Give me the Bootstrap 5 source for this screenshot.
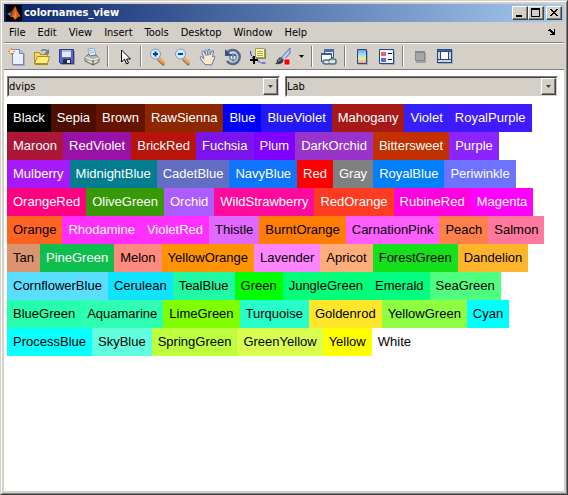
<!DOCTYPE html>
<html lang="en">
<head>
<meta charset="utf-8">
<meta name="viewport" content="width=device-width, initial-scale=1">
<title>colornames_view</title>
<link href="https://cdn.jsdelivr.net/npm/bootstrap@5.3.0/dist/css/bootstrap.min.css" rel="stylesheet">
<style>
  :root { --face: #d4d0c8; --shade: #808080; --dark: #404040; }
  body { background: var(--face); color: #000; font: 11px/16px "DejaVu Sans Condensed", "Noto Sans", sans-serif; }
  button { padding: 0; border: 0; background: none; color: #000; }
  svg { display: block; }
  .win-outer { border: 1px solid; border-color: var(--face) var(--dark) var(--dark) var(--face); }
  .win-inner { border: 1px solid; border-color: #fff var(--shade) var(--shade) #fff; padding: 2px; }
  .titlebar { height: 18px; background: linear-gradient(90deg, #0a246a, #a6caf0); color: #fff; padding: 0 2px; }
  .titlebar h1 { font-size: 11px; line-height: 18px; font-weight: 700; padding-left: 2px; }
  .win-btn { width: 16px; height: 14px; background: var(--face); border: 1px solid; border-color: #fff var(--dark) var(--dark) #fff; box-shadow: inset -1px -1px var(--shade); }
  .win-close { margin-left: 2px; }
  .menubar { height: 21px; padding-left: 5px; border-bottom: 1px solid var(--shade); }
  .menubar a { color: #000; text-decoration: none; margin-right: 12px; line-height: 21px; }
  .toolbar { height: 27px; border-top: 1px solid #fff; border-bottom: 1px solid var(--shade); }
  .tool { width: 25px; height: 24px; }
  .tool-more { width: 13px; }
  .divider { width: 2px; height: 21px; margin: 0 3px; background: linear-gradient(90deg, var(--shade) 50%, #fff 50%); }
  .figure-area { padding: 6px 6px 0 3px; gap: 7px; }
  .combos { gap: 5px; }
  .combo { border: 1px solid; border-color: var(--shade) #fff #fff var(--shade); }
  .combo select { appearance: none; height: 19px; padding: 1px 0 0; border: 1px solid; border-color: var(--dark) var(--face) var(--face) var(--dark); border-radius: 0; background: var(--face); color: #000; }
  .combo-arrow { right: 1px; top: 1px; width: 15px; height: 17px; background: var(--face); border: 1px solid; border-color: #fff var(--dark) var(--dark) #fff; box-shadow: inset -1px -1px var(--shade); pointer-events: none; }
  .swatch { height: 28px; padding: 0 6px; color: #000; font: 13px/28px "Liberation Sans", Arial, sans-serif; white-space: nowrap; }
  .swatch.on-dark { color: #fff; }
</style>
<script src="https://cdn.jsdelivr.net/npm/bootstrap@5.3.0/dist/js/bootstrap.bundle.min.js"></script>
</head>
<body>
<div class="win-outer vh-100 d-flex">
<div class="win-inner flex-fill d-flex flex-column overflow-hidden">
  <header class="titlebar d-flex align-items-center flex-shrink-0">
    <svg width="16" height="16" viewBox="0 0 16 16" aria-hidden="true"><rect width="16" height="16" fill="#000"/><path d="M1 9l4-2 2-2 2 2-4 5-2-2z" fill="#4a90b0"/><path d="M5 7l4-5-1 6-3 4-1-1z" fill="#70371c"/><path d="M9 1c1 1 2 5 4 8l2 3c-2-1-3 0-4 1l-2 2-2-3-2 0z" fill="#e05a1a"/><path d="M9 2l1 5-2 5 1 2 1-6z" fill="#f8a840"/></svg>
    <h1 class="m-0 flex-fill">colornames_view</h1>
    <button type="button" class="win-btn" aria-label="Minimize"><svg width="14" height="12" shape-rendering="crispEdges"><path d="M3 8h6v2H3z"/></svg></button>
    <button type="button" class="win-btn" aria-label="Maximize"><svg width="14" height="12" shape-rendering="crispEdges"><path fill-rule="evenodd" d="M2 1h9v9H2zM3 3v6h7V3z"/></svg></button>
    <button type="button" class="win-btn win-close" aria-label="Close"><svg width="14" height="12" shape-rendering="crispEdges"><path d="M3 2h2v1h1v1h2v-1h1v-1h2v1h-1v1h-1v1h-1v1h1v1h1v1h1v1h-2v-1h-1v-1h-2v1h-1v1h-2v-1h1v-1h1v-1h1v-1h-1v-1h-1v-1h-1z"/></svg></button>
  </header>

  <nav class="menubar d-flex flex-shrink-0">
    <a href="#">File</a><a href="#">Edit</a><a href="#">View</a><a href="#">Insert</a><a href="#">Tools</a><a href="#">Desktop</a><a href="#">Window</a><a href="#">Help</a>
    <button type="button" class="ms-auto me-1 px-1" aria-label="Dock figure"><svg width="8" height="8" shape-rendering="crispEdges"><path d="M0 2h1v-1h2v1h1v1h1v1h1v-3h1v6h-5v-1h2v-1h-1v-1h-1v-1h-2z"/></svg></button>
  </nav>

  <div class="toolbar d-flex align-items-center flex-shrink-0" role="toolbar" aria-label="Figure tools">
    <button type="button" class="tool d-flex align-items-center justify-content-center" aria-label="New figure"><svg width="18" height="18"><path d="M5 2h8l4 4v12H5z" fill="#8e98a8" opacity=".6"/><path d="M4.500 1.500h7l4 4v11h-11z" fill="#e8f2ff" stroke="#6b87bd"/><path d="M11.500 1.500v4h4" fill="#b5cef0" stroke="#6b87bd"/><path d="M1 1l5 5M6 1L1 6M3.500 0v7M0 3.500h7" stroke="#e77a43"/><rect x="2" y="2" width="3" height="3" fill="#ffe5a6"/></svg></button>
    <button type="button" class="tool d-flex align-items-center justify-content-center" aria-label="Open"><svg width="18" height="18"><path d="M2 5h5l2 2h6v10H2z" fill="#ad8419"/><path d="M1.500 4.500h5l1 2h7v9h-13z" fill="#f6d968" stroke="#b28a20"/><path d="M1.500 15.500l3-7h12l-2 7z" fill="#ffeb83" stroke="#b28a20"/><path d="M8 3q4-3 7 1" fill="none" stroke="#60809c" stroke-width="1.500"/><path d="M16 1v5h-5z" fill="#60809c"/></svg></button>
    <button type="button" class="tool d-flex align-items-center justify-content-center" aria-label="Save"><svg width="18" height="18"><path d="M3 3h14v14H3z" fill="#9b9b9b"/><path d="M1.500 1.500h14v14h-13l-1-1z" fill="#5663ce" stroke="#30388b"/><path d="M4 2h9v7H4z" fill="#e5ebff"/><path d="M4 2h9v2H4z" fill="#a9bbeb"/><path d="M5 11h8v5H5z" fill="#222c49"/><path d="M9 12h3v3H9z" fill="#e4e7ef"/></svg></button>
    <button type="button" class="tool d-flex align-items-center justify-content-center" aria-label="Print"><svg width="18" height="18"><path d="M5 1l6-1 2 7-7 2z" fill="#e2f1ff" stroke="#88a8cb"/><path d="M6 3l4-1M7 5l4-1" stroke="#8dacdd"/><path d="M2 9l4-3 1 2 6-1 3 3v4l-6 3-8-4z" fill="#b9b9b2" stroke="#6f6f6d"/><path d="M2 9l8 3 6-2M5 13l5 2 4-2" fill="none" stroke="#f6f6ef"/><path d="M10 12v5" stroke="#4e4e4c"/></svg></button>
    <span class="divider"></span>
    <button type="button" class="tool d-flex align-items-center justify-content-center" aria-label="Edit plot"><svg width="18" height="18"><path d="M5.500 2v12l3-3 2 5 2-1-2-4h4z" fill="#fff" stroke="#000"/></svg></button>
    <span class="divider"></span>
    <button type="button" class="tool d-flex align-items-center justify-content-center" aria-label="Zoom in"><svg width="18" height="18"><path d="M9 11l6 6" stroke="#8c7a65" stroke-width="3"/><path d="M9 9l6 6" stroke="#f0a747" stroke-width="3"/><circle cx="6.500" cy="6" r="5" fill="#cfefff" stroke="#7c99c8"/><path d="M4 6h5M6.500 3.500v5" stroke="#143b9b" stroke-width="2"/></svg></button>
    <button type="button" class="tool d-flex align-items-center justify-content-center" aria-label="Zoom out"><svg width="18" height="18"><path d="M9 11l6 6" stroke="#8c7a65" stroke-width="3"/><path d="M9 9l6 6" stroke="#f0a747" stroke-width="3"/><circle cx="6.500" cy="6" r="5" fill="#cfefff" stroke="#7c99c8"/><path d="M4 6h5" stroke="#143b9b" stroke-width="2"/></svg></button>
    <button type="button" class="tool d-flex align-items-center justify-content-center" aria-label="Pan"><svg width="18" height="18"><path d="M6 16.500l-4-5q-2-3 0-3l3 2-2-6q0-2 2-1l2 4-1-5q1-2 2 0l1 5V2q1-2 2 0v5l2-4q2-1 1.500 1l-1 5 1-1q2 0 1 2l-2 5-1 2z" fill="#ffe9cb" stroke="#5b7cba"/></svg></button>
    <button type="button" class="tool d-flex align-items-center justify-content-center" aria-label="Rotate 3D"><svg width="18" height="18"><path d="M3 5a7 7 0 1 1 0 8" fill="none" stroke="#52688e" stroke-width="2.500"/><path d="M1 1v7h7z" fill="#3a5280"/><path d="M6 7l3-1 3 1v4l-3 2-3-2zM6 7l3 1 3-1M9 8v5" fill="#e6f1ff" stroke="#38588c"/></svg></button>
    <button type="button" class="tool d-flex align-items-center justify-content-center" aria-label="Data cursor"><svg width="18" height="18"><path d="M1.500 3q0 5 4 9 4 0 6 3h5" fill="none" stroke="#1a20ed" stroke-dasharray="5 1"/><path d="M7 1h10v10H7z" fill="#868568"/><path d="M6.500.5h9v9h-9z" fill="#fffbb2" stroke="#a69e45"/><path d="M8 3.500h6M8 5.500h6M8 7.500h6" stroke="#b0a95c"/><path d="M1 12h8M5 8v8" stroke="#000" stroke-width="2"/></svg></button>
    <button type="button" class="tool d-flex align-items-center justify-content-center" aria-label="Brush"><svg width="18" height="18"><path d="M7 10l9-10v5l-6 7z" fill="#c0c7ef" stroke="#616eb4"/><path d="M1 16q2-1 2-4l3-3 4 3q-1 5-9 4z" fill="#36424e"/><path d="M4 13l3-2" stroke="#a8b4bf"/><path d="M10 11h6v6h-6z" fill="#f00" stroke="#fff" stroke-width=".7"/></svg></button>
    <button type="button" class="tool tool-more d-flex align-items-center justify-content-center" aria-label="Brush options"><svg width="5" height="3"><path d="M0 0h5L2.500 3z"/></svg></button>
    <span class="divider"></span>
    <button type="button" class="tool d-flex align-items-center justify-content-center" aria-label="Link plot"><svg width="18" height="18"><path d="M4.500 1.500h9v8h-9z" fill="#edf3ff" stroke="#304f91"/><path d="M4 1h10v3H4z" fill="#4b6fb4"/><path d="M1.500 5.500h10v8h-10z" fill="#fff" stroke="#304f91"/><path d="M1 5h11v2H1z" fill="#3c5d9d"/><g fill="#cfe0e7" stroke="#58707e" stroke-width="1.500"><rect x="3" y="12" width="7" height="4" rx="2"/><rect x="9" y="11" width="7" height="5" rx="2"/></g><path d="M7 14h5" stroke="#fff"/></svg></button>
    <span class="divider"></span>
    <button type="button" class="tool d-flex align-items-center justify-content-center" aria-label="Insert colorbar"><svg width="18" height="18"><defs><linearGradient id="bar" x2="0" y2="1"><stop stop-color="#8a8df0"/><stop offset=".35" stop-color="#8de5ef"/><stop offset=".65" stop-color="#f1e99b"/><stop offset="1" stop-color="#f19e8c"/></linearGradient></defs><path d="M5 3h10v14H5z" fill="#a9a9a9"/><path d="M4.500 1.500h9v14h-9z" fill="url(#bar)" stroke="#244687"/></svg></button>
    <button type="button" class="tool d-flex align-items-center justify-content-center" aria-label="Insert legend"><svg width="18" height="18"><path d="M3 3h14v14H3z" fill="#a5acb5"/><path d="M1.500 1.500h14v14h-14z" fill="#eef5ff" stroke="#244687"/><path d="M3 4h5v4H3z" fill="#e56464"/><path d="M3 10h5v4H3z" fill="#6068e5"/><path d="M10 5h4v1h-4zM10 11h4v1h-4z"/></svg></button>
    <span class="divider"></span>
    <button type="button" class="tool d-flex align-items-center justify-content-center" aria-label="Hide plot tools" disabled><svg width="18" height="18"><path d="M5 5h10v10H5z" fill="#a3a3a3"/><path d="M4.500 3.500h9v9h-9z" fill="#a6a6a6" stroke="#888"/><path d="M4 3h10v2H4z" fill="#888"/></svg></button>
    <button type="button" class="tool d-flex align-items-center justify-content-center" aria-label="Show plot tools"><svg width="18" height="18" shape-rendering="crispEdges"><path d="M2 2h15v14H2z" fill="#a4a9ae"/><path d="M1 1h15v14H1z" fill="#244687"/><path d="M2 4h2v7H2zM13 4h2v7h-2zM2 12h13v2H2z" fill="#d0d4d4"/><path d="M5 4h7v7H5z" fill="#fff"/><path d="M2 2h13v1H2z" fill="#4a6cb2"/></svg></button>
  </div>

  <main class="figure-area flex-fill bg-white d-flex flex-column overflow-hidden">
    <div class="combos d-flex">
      <div class="col combo position-relative">
        <select class="w-100 d-block" aria-label="Palette"><option>dvips</option></select>
        <span class="combo-arrow position-absolute d-flex align-items-center justify-content-center"><svg width="5" height="3"><path d="M0 0h5L2.500 3z" fill="#404040"/></svg></span>
      </div>
      <div class="col combo position-relative">
        <select class="w-100 d-block" aria-label="Sort order"><option>Lab</option></select>
        <span class="combo-arrow position-absolute d-flex align-items-center justify-content-center"><svg width="5" height="3"><path d="M0 0h5L2.500 3z" fill="#404040"/></svg></span>
      </div>
    </div>
    <div id="palette"></div>
  </main>
</div>
</div>
<script>
  // Names in display order; a leading "*" marks colours that take a white label.
  const rows = [
    "*Black 000000,*Sepia 4d0d00,*Brown 661300,*RawSienna 8c2700,*Blue 0000ff,*BlueViolet 2419f5,*Mahogany a61916,*Violet 361fff,*RoyalPurple 4019ff",
    "*Maroon ad1737,*RedViolet 9a11a8,*BrickRed b8140b,*Fuchsia 7a14eb,*Plum 8000ff,*DarkOrchid 9933cc,*Bittersweet c23000,*Purple 8c24ff",
    "*Mulberry a619fa,*MidnightBlue 037e91,*CadetBlue 616ec4,*NavyBlue 0f75ff,*Red ff0000,*Gray 808080,*RoyalBlue 0080ff,*Periwinkle 6e73ff",
    "*OrangeRed ff0080,*OliveGreen 379908,*Orchid ad5cff,*WildStrawberry ff0a9c,*RedOrange ff3b21,*RubineRed ff00de,*Magenta ff00ff",
    "Orange ff6321,*Rhodamine ff2eff,*VioletRed ff30ff,Thistle e068ff,BurntOrange ff7d00,CarnationPink ff5eff,Peach ff804d,Salmon ff789e",
    "Tan db9470,*PineGreen 0fbf4e,Melon ff8a80,YellowOrange ff9400,Lavender ff85ff,Apricot ffad7a,ForestGreen 14e01b,Dandelion ffb529",
    "CornflowerBlue 59deff,Cerulean 0fe3ff,TealBlue 1ffaa3,Green 00ff00,JungleGreen 03ff7a,Emerald 00ff80,SeaGreen 4fff80",
    "BlueGreen 26ffab,Aquamarine 2effb3,LimeGreen 80ff00,Turquoise 26ffcc,Goldenrod ffe629,YellowGreen 8fff42,Cyan 00ffff",
    "ProcessBlue 0affff,SkyBlue 61ffe0,SpringGreen bdff3d,GreenYellow d9ff4f,Yellow ffff00,White ffffff"
  ];
  const palette = document.getElementById("palette");
  for (const row of rows) {
    const line = document.createElement("div");
    line.className = "d-flex";
    for (const item of row.split(",")) {
      const [name, hex] = item.split(" ");
      const cell = document.createElement("span");
      cell.className = "swatch" + (name[0] === "*" ? " on-dark" : "");
      cell.textContent = name.replace("*", "");
      cell.style.backgroundColor = "#" + hex;
      line.append(cell);
    }
    palette.append(line);
  }
</script>
</body>
</html>
